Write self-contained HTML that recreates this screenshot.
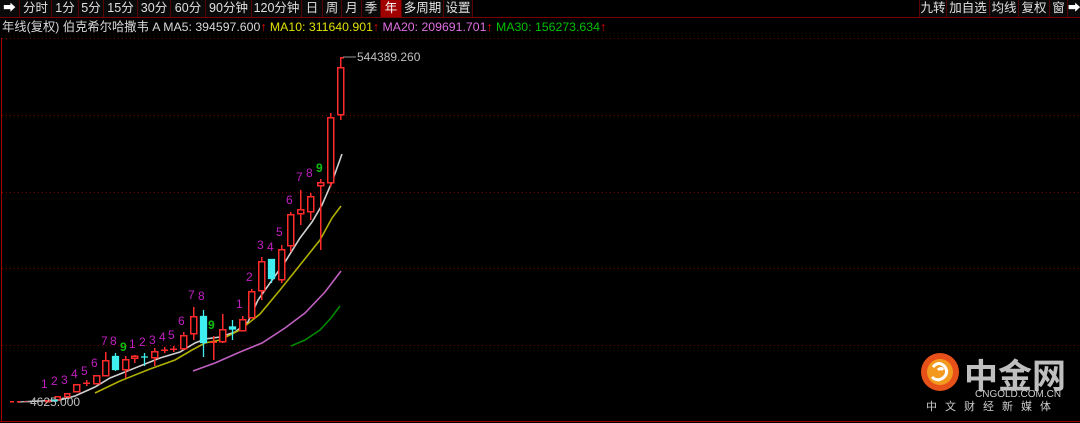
<!DOCTYPE html>
<html><head><meta charset="utf-8"><style>
*{margin:0;padding:0;box-sizing:border-box}
body{width:1080px;height:423px;background:#000;overflow:hidden;position:relative;font-family:"Liberation Sans","Noto Sans CJK SC",sans-serif;}
.tb{position:absolute;top:0;left:0;width:1080px;height:18px;border-bottom:1px solid #7a0000;}
.b{position:absolute;top:0;height:17px;border-right:1px solid #5a0000;color:#e0e0e0;font-size:12.5px;line-height:17px;text-align:center;background:#0a0a0a}
.b.sel{background:#a00000;color:#fff}
.info{position:absolute;top:19px;left:2px;font-size:12.3px;line-height:16px;white-space:nowrap;color:#d8d8d8}
</style></head><body>
<div class="tb">
<div class="b" style="left:0;width:20px;color:#fff">➡</div>
<div class="b" style="left:20px;width:32px">分时</div>
<div class="b" style="left:52px;width:27px">1分</div>
<div class="b" style="left:79px;width:25px">5分</div>
<div class="b" style="left:104px;width:34px">15分</div>
<div class="b" style="left:138px;width:33px">30分</div>
<div class="b" style="left:171px;width:35px">60分</div>
<div class="b" style="left:206px;width:46px">90分钟</div>
<div class="b" style="left:252px;width:50px">120分钟</div>
<div class="b" style="left:302px;width:21px">日</div>
<div class="b" style="left:323px;width:19px">周</div>
<div class="b" style="left:342px;width:20px">月</div>
<div class="b" style="left:362px;width:19px">季</div>
<div class="b sel" style="left:381px;width:21px">年</div>
<div class="b" style="left:402px;width:42px">多周期</div>
<div class="b" style="left:444px;width:29px">设置</div>
<div class="b" style="left:919px;width:28px;border-left:1px solid #5a0000">九转</div>
<div class="b" style="left:947px;width:43px">加自选</div>
<div class="b" style="left:990px;width:29px">均线</div>
<div class="b" style="left:1019px;width:31px">复权</div>
<div class="b" style="left:1050px;width:18px">窗</div>
<div class="b" style="left:1068px;width:12px;color:#fff;border:none">➡</div>
</div>
<div class="info">年线(复权) 伯克希尔哈撒韦 A MA5: 394597.600<span style="color:#e00">↑</span> <span style="color:#e0e000">MA10: 311640.901</span><span style="color:#e00">↑</span> <span style="color:#e070e0">MA20: 209691.701</span><span style="color:#e00">↑</span> <span style="color:#00c000">MA30: 156273.634</span><span style="color:#e00">↑</span></div>
<svg width="1080" height="423" style="position:absolute;left:0;top:0" xmlns="http://www.w3.org/2000/svg">
<g stroke="#7a0000" stroke-dasharray="1,3" stroke-width="1">
<line x1="2" y1="38.5" x2="1080" y2="38.5"/><line x1="2" y1="115.5" x2="1080" y2="115.5"/><line x1="2" y1="192.5" x2="1080" y2="192.5"/><line x1="2" y1="268.5" x2="1080" y2="268.5"/><line x1="2" y1="345.5" x2="1080" y2="345.5"/>
</g>
<line x1="1.5" y1="38" x2="1.5" y2="421" stroke="#a00000"/>
<line x1="0" y1="421.5" x2="1080" y2="421.5" stroke="#a00000"/>
<g fill="none" stroke-width="1.6">
<polyline stroke="#d0d0d0" points="18,402 40,401 60,400 75,396 95,387 110,378 125,372 140,366 160,358 180,352 195,343 205,339 220,337 235,332 248,322 258,300 270,283 285,262 300,238 312,222 322,205 332,182 342,154"/>
<polyline stroke="#b0b000" points="95,393 120,381 150,369 175,360 192,350 205,343 220,340 240,330 260,314 280,290 300,265 320,240 332,218 341,206"/>
<polyline stroke="#c060c0" points="193,371 215,363 240,352 262,343 285,328 305,313 325,292 341,271"/>
<polyline stroke="#008800" points="291,346 305,340 320,330 331,318 340,306"/>
</g>
<g stroke="#ff2a2a" stroke-width="1.5" fill="none" shape-rendering="crispEdges">
<line x1="10" y1="401.5" x2="30" y2="401.5" stroke-dasharray="4,3"/>
<rect x="45.5" y="400.5" width="4" height="1"/>
<rect x="55" y="396.5" width="5" height="3"/>
<rect x="64.5" y="393.5" width="5" height="3"/>
<rect x="73.5" y="384.5" width="6" height="7"/>
<line x1="83" y1="383" x2="90" y2="383"/><line x1="86.5" y1="380" x2="86.5" y2="386"/>
<rect x="93.5" y="375.5" width="6" height="8"/>
<line x1="105.5" y1="352" x2="105.5" y2="376"/><rect x="102.5" y="360.5" width="6" height="15" fill="#000"/>
<line x1="125.5" y1="356" x2="125.5" y2="378"/><rect x="122.5" y="359.5" width="6" height="10" fill="#000"/>
<line x1="134.5" y1="355" x2="134.5" y2="363"/><rect x="131.5" y="356" width="6" height="2" fill="#000"/>
<line x1="154.5" y1="348" x2="154.5" y2="366"/><rect x="151.5" y="351.5" width="6" height="6" fill="#000"/>
<line x1="161" y1="350" x2="168" y2="350"/><line x1="164.5" y1="347" x2="164.5" y2="353"/>
<line x1="170" y1="349" x2="177" y2="349"/><line x1="173.5" y1="346" x2="173.5" y2="352"/>
<line x1="183.5" y1="332" x2="183.5" y2="350"/><rect x="180.5" y="335.5" width="6" height="13" fill="#000"/>
<line x1="193.5" y1="307" x2="193.5" y2="340"/><rect x="190.5" y="316.5" width="6" height="17" fill="#000"/>
<line x1="213.5" y1="336" x2="213.5" y2="360"/><line x1="210" y1="342" x2="217" y2="342"/>
<line x1="222.5" y1="314" x2="222.5" y2="343"/><rect x="219.5" y="329.5" width="6" height="12" fill="#000"/>
<line x1="242.5" y1="316" x2="242.5" y2="331"/><rect x="239.5" y="319.5" width="6" height="11" fill="#000"/>
<line x1="251.5" y1="289" x2="251.5" y2="318"/><rect x="248.5" y="291.5" width="6" height="26" fill="#000"/>
<line x1="261.5" y1="257" x2="261.5" y2="300"/><rect x="258.5" y="261.5" width="6" height="29" fill="#000"/>
<line x1="281.5" y1="245" x2="281.5" y2="283"/><rect x="278.5" y="249.5" width="6" height="30" fill="#000"/>
<line x1="290.5" y1="212" x2="290.5" y2="252"/><rect x="287.5" y="214.5" width="6" height="31" fill="#000"/>
<line x1="300.5" y1="190" x2="300.5" y2="225"/><rect x="297.5" y="209.5" width="6" height="4" fill="#000"/>
<line x1="310.5" y1="193" x2="310.5" y2="220"/><rect x="307.5" y="196.5" width="6" height="15" fill="#000"/>
<line x1="320.5" y1="179" x2="320.5" y2="250"/><rect x="317.5" y="182.5" width="6" height="3" fill="#000"/>
<line x1="330.5" y1="113" x2="330.5" y2="187"/><rect x="327.5" y="117.5" width="6" height="65" fill="#000"/>
<line x1="340.5" y1="57" x2="340.5" y2="120"/><rect x="337.5" y="67.5" width="6" height="47" fill="#000"/>
<line x1="340" y1="57.5" x2="344" y2="57.5"/>
</g>
<g fill="#40f0f0" stroke="#40f0f0" stroke-width="1.3">
<rect x="52" y="400" width="5" height="1"/>
<line x1="115.5" y1="353" x2="115.5" y2="371"/><rect x="112.5" y="356.5" width="6" height="13"/>
<line x1="144.5" y1="353" x2="144.5" y2="366"/><line x1="141" y1="357" x2="148" y2="357"/>
<line x1="203.5" y1="310" x2="203.5" y2="357"/><rect x="200.5" y="316.5" width="6" height="26"/>
<line x1="232.5" y1="320" x2="232.5" y2="340"/><rect x="229.5" y="327" width="6" height="2"/>
<line x1="271.5" y1="259" x2="271.5" y2="283"/><rect x="268.5" y="259.5" width="6" height="19"/>
</g>
<line x1="343" y1="57" x2="356" y2="57" stroke="#999"/>
<text x="357" y="61" fill="#c0c0c0" font-size="12" font-family="Liberation Sans">544389.260</text>
<line x1="20" y1="402" x2="30" y2="402" stroke="#999"/>
<text x="30" y="406" fill="#c0c0c0" font-size="12" font-family="Liberation Sans">4625.000</text>
<g fill="#c020c0" font-size="12" font-family="Liberation Sans">
<text x="41" y="388">1</text><text x="51" y="385">2</text><text x="61" y="384">3</text><text x="71" y="378">4</text><text x="81" y="375">5</text><text x="91" y="367">6</text>
<text x="101" y="345">7</text><text x="110" y="345">8</text><text x="129" y="348">1</text><text x="139" y="346">2</text><text x="149" y="344">3</text><text x="159" y="341">4</text><text x="168" y="339">5</text><text x="178" y="325">6</text>
<text x="188" y="299">7</text><text x="198" y="300">8</text><text x="236" y="308">1</text><text x="246" y="281">2</text><text x="257" y="249">3</text><text x="267" y="251">4</text><text x="276" y="236">5</text><text x="286" y="204">6</text><text x="296" y="181">7</text><text x="306" y="177">8</text>
</g>
<g fill="#10c010" font-size="12" font-family="Liberation Sans" font-weight="bold">
<text x="120" y="351">9</text><text x="208" y="329">9</text><text x="316" y="172">9</text>
</g>
<circle cx="940" cy="372" r="19" fill="#e8501a"/>
<circle cx="940" cy="372" r="13" fill="#f39a1e"/>
<path d="M933 367 q6 -7 12 0 q4 6 -2 11 q-6 4 -11 -1 M938 370 q3 -3 5 0" stroke="#fff" stroke-width="3" fill="none"/>
<text x="964" y="388" fill="#bfbfbf" font-size="34" font-weight="bold" font-family="Noto Sans CJK SC,sans-serif">中金网</text>
<text x="975" y="397" fill="#ccc" font-size="10" font-family="Liberation Sans">CNGOLD.COM.CN</text>
<text x="926" y="410" fill="#ccc" font-size="11" letter-spacing="8" font-family="Noto Sans CJK SC,sans-serif">中文财经新媒体</text>
</svg>
</body></html>
